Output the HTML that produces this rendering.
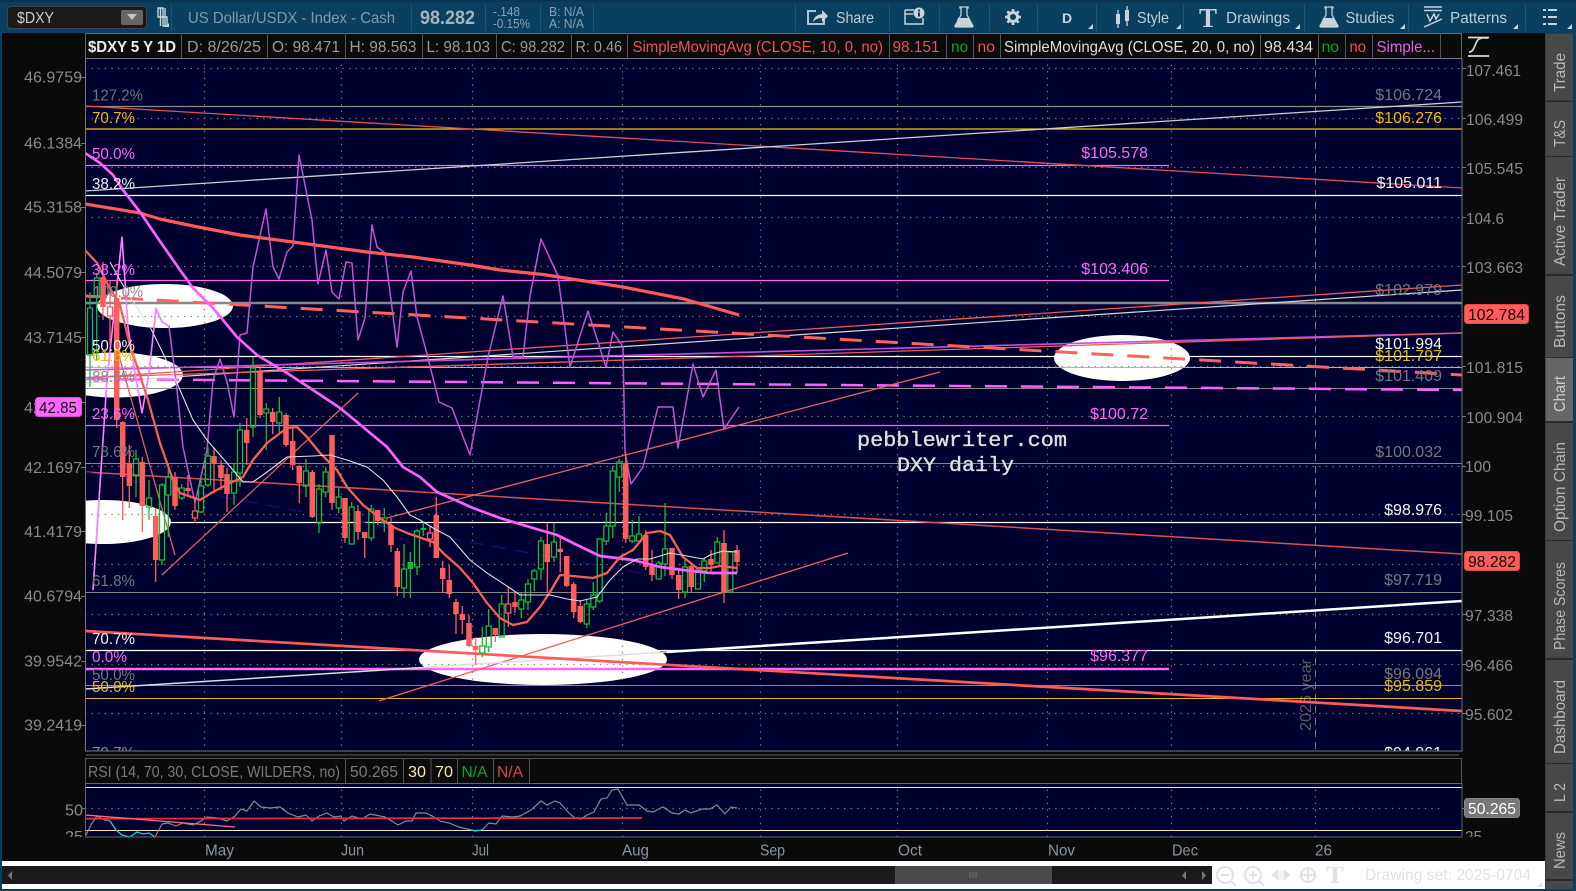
<!DOCTYPE html>
<html><head><meta charset="utf-8"><title>DXY</title>
<style>html,body{margin:0;padding:0;background:#0a3f5f;width:1576px;height:891px;overflow:hidden}svg{display:block;font-family:"Liberation Sans",sans-serif;font-size:16px}</style></head>
<body>
<svg width="1576" height="891" viewBox="0 0 1576 891" xmlns="http://www.w3.org/2000/svg">
<defs>
<clipPath id="c"><rect x="85" y="58" width="1377" height="693"/></clipPath>
<clipPath id="r"><rect x="85" y="783" width="1377" height="54"/></clipPath>
<clipPath id="a"><rect x="2" y="783" width="1544" height="54"/></clipPath>
</defs>
<rect width="1576" height="891" fill="#0a3f5f"/>
<rect width="1576" height="2" fill="#0c3550"/>
<rect x="2" y="33" width="1543" height="828" fill="#0a0a0a"/>
<rect x="1545" y="33" width="28" height="856" fill="#2a2a2a"/>
<rect x="2" y="861" width="1543" height="28" fill="#fff"/>

<!-- top bar -->
<g stroke="#1f5674" stroke-width="1"><path d="M171.500 4V31M411.500 4V31M485.500 4V31M540.500 4V31M593.500 4V31M795.500 4V31M889.500 4V31M939.500 4V31M989.500 4V31M1037.500 4V31M1096.500 4V31M1183.500 4V31M1304.500 4V31M1408.500 4V31M1525.500 4V31"/></g>
<rect x="7.500" y="6.500" width="139" height="22" rx="3" fill="#1a1a1a" stroke="#444"/>
<text x="17" y="23" fill="#ccc" textLength="37" lengthAdjust="spacingAndGlyphs">$DXY</text>
<rect x="121" y="10" width="22" height="15" rx="2" fill="#666"/><path d="M127 14h10l-5 6z" fill="#c4c4c4"/>
<path d="M158 8h5v9h-5zM163 17h4v9h-4zM160.500 8v18M165 8v18" fill="none" stroke="#c8d4dc" stroke-width="1.400"/><path d="M169 27h-4l4-4z" fill="#c8d4dc"/>
<text x="188" y="23" fill="#7f99a9" textLength="207" lengthAdjust="spacingAndGlyphs">US Dollar/USDX - Index - Cash</text>
<text x="420" y="24" fill="#a4b4bd" font-weight="bold" font-size="19" textLength="55" lengthAdjust="spacingAndGlyphs">98.282</text>
<text x="493" y="16" fill="#8ba2b0" font-size="13" textLength="27" lengthAdjust="spacingAndGlyphs">-.148</text>
<text x="493" y="28" fill="#8ba2b0" font-size="13" textLength="37" lengthAdjust="spacingAndGlyphs">-0.15%</text>
<text x="549" y="16" fill="#8ba2b0" font-size="13" textLength="35" lengthAdjust="spacingAndGlyphs">B: N/A</text>
<text x="549" y="28" fill="#8ba2b0" font-size="13" textLength="35" lengthAdjust="spacingAndGlyphs">A: N/A</text>
<path d="M816 11h-8v13h16v-5" fill="none" stroke="#c8d4dc" stroke-width="1.800"/>
<path d="M813 22q1-7 9-8v-4l6 6-6 6v-4q-6 0-9 4z" fill="#c8d4dc"/>
<text x="836" y="23" fill="#c0ccd4" textLength="38" lengthAdjust="spacingAndGlyphs">Share</text>
<path d="M905 10v14h18v-6M905 10h9M905 14h8" fill="none" stroke="#c8d4dc" stroke-width="1.500"/>
<circle cx="919" cy="13" r="5.500" fill="#c8d4dc"/><path d="M918 9.500h2v2h-2zM918 12.500h2v4h-2z" fill="#0a3f5f"/>
<path d="M960 7h8v1h-1v7l6 11q0 1-1 1h-16q-1 0-1-1l6-11V8h-1z" fill="none" stroke="#c8d4dc" stroke-width="1.300"/><path d="M958 18h11l4 9h-18z" fill="#c8d4dc"/>
<circle cx="1013" cy="17" r="4.500" fill="none" stroke="#c8d4dc" stroke-width="3"/>
<path d="M1013 9v16M1005 17h16M1007.300 11.300l11.400 11.400M1018.700 11.300l-11.400 11.400" stroke="#c8d4dc" stroke-width="2.600" stroke-dasharray="2.600 10.800"/>
<text x="1062" y="23" fill="#c8d4dc" font-weight="bold" font-size="14">D</text>
<path d="M1116 14h4v10h-4zM1125 10h4v11h-4z" fill="#c8d4dc"/><path d="M1118 10v18M1127 6v20" stroke="#c8d4dc" stroke-width="1.300"/>
<text x="1137" y="23" fill="#c0ccd4" textLength="32" lengthAdjust="spacingAndGlyphs">Style</text>
<text x="1199" y="27" fill="#c8d4dc" font-size="27" font-weight="bold" style="font-family:'Liberation Serif',serif" textLength="18" lengthAdjust="spacingAndGlyphs">T</text>
<text x="1226" y="23" fill="#c0ccd4" textLength="64" lengthAdjust="spacingAndGlyphs">Drawings</text>
<path d="M1325 7h8v1h-1v7l6 11q0 1-1 1h-16q-1 0-1-1l6-11V8h-1z" fill="none" stroke="#c8d4dc" stroke-width="1.300"/><path d="M1323 18h11l4 9h-18z" fill="#c8d4dc"/>
<text x="1345.500" y="23" fill="#c0ccd4" textLength="49" lengthAdjust="spacingAndGlyphs">Studies</text>
<path d="M1424 7h18M1424 10.500h18M1427 14l3 7 4-7 2 5 3-5M1424 27l18-8" fill="none" stroke="#c8d4dc" stroke-width="1.500"/>
<text x="1450" y="23" fill="#c0ccd4" textLength="57" lengthAdjust="spacingAndGlyphs">Patterns</text>
<path d="M1543 10h3M1543 17h3M1543 24h3M1548 10h9M1548 17h9M1548 24h9" stroke="#c8d4dc" stroke-width="2"/>
<path d="M1093 24v5h-5zM1181 24v5h-5zM1300 24v5h-5zM1405 24v5h-5zM1518 24v5h-5zM1572 24v5h-5z" fill="#c8d4dc"/>

<!-- header row -->
<rect x="85.500" y="33.500" width="1376" height="25" fill="#0b0b0b" stroke="#666"/>
<path d="M181.500 33V58M267.500 33V58M345.500 33V58M422.500 33V58M496.500 33V58M571.500 33V58M627.500 33V58M889.500 33V58M946.500 33V58M973.500 33V58M1000.500 33V58M1260.500 33V58M1318.500 33V58M1345.500 33V58M1372.500 33V58M1440.500 33V58" stroke="#555"/>
<text x="88" y="52" fill="#eee" font-weight="bold" textLength="88" lengthAdjust="spacingAndGlyphs">$DXY 5 Y 1D</text>
<g fill="#9a9a9a">
<text x="187" y="52" textLength="74" lengthAdjust="spacingAndGlyphs">D: 8/26/25</text>
<text x="272" y="52" textLength="68" lengthAdjust="spacingAndGlyphs">O: 98.471</text>
<text x="349.500" y="52" textLength="67" lengthAdjust="spacingAndGlyphs">H: 98.563</text>
<text x="426.500" y="52" textLength="63.500" lengthAdjust="spacingAndGlyphs">L: 98.103</text>
<text x="501" y="52" textLength="64" lengthAdjust="spacingAndGlyphs">C: 98.282</text>
<text x="575.500" y="52" textLength="46.500" lengthAdjust="spacingAndGlyphs">R: 0.46</text>
</g>
<text x="632.500" y="52" fill="#f05050" textLength="250.500" lengthAdjust="spacingAndGlyphs">SimpleMovingAvg (CLOSE, 10, 0, no)</text>
<text x="892.500" y="52" fill="#f05050" textLength="47" lengthAdjust="spacingAndGlyphs">98.151</text>
<text x="951" y="52" fill="#00a828" textLength="17" lengthAdjust="spacingAndGlyphs">no</text>
<text x="977.500" y="52" fill="#f05050" textLength="17.500" lengthAdjust="spacingAndGlyphs">no</text>
<text x="1004" y="52" fill="#ddd" textLength="251" lengthAdjust="spacingAndGlyphs">SimpleMovingAvg (CLOSE, 20, 0, no)</text>
<text x="1264" y="52" fill="#ddd" textLength="49" lengthAdjust="spacingAndGlyphs">98.434</text>
<text x="1321.500" y="52" fill="#00a828" textLength="17.500" lengthAdjust="spacingAndGlyphs">no</text>
<text x="1349.500" y="52" fill="#f05050" textLength="16.500" lengthAdjust="spacingAndGlyphs">no</text>
<text x="1376.500" y="52" fill="#e060f0" textLength="58.500" lengthAdjust="spacingAndGlyphs">Simple...</text>

<!-- chart -->
<rect x="85" y="58" width="1377" height="693" fill="#000030"/>
<g clip-path="url(#c)">
<g fill="#fff">
<ellipse cx="165" cy="306" rx="68" ry="22"/>
<ellipse cx="115" cy="375" rx="68" ry="22.500"/>
<ellipse cx="103" cy="522" rx="68" ry="22"/>
<ellipse cx="1122" cy="358" rx="68" ry="23"/>
<ellipse cx="543" cy="659.500" rx="124" ry="25.500"/>
</g>
<g stroke="#85856a" stroke-width="1.200" stroke-dasharray="1.300 5.300" fill="none">
<path d="M85 68.500H1462M85 118.500H1462M85 167.500H1462M85 217.500H1462M85 266.500H1462M85 316.500H1462M85 366.500H1462M85 416.500H1462M85 466.500H1462M85 514.500H1462M85 564.500H1462M85 614.500H1462M85 664.500H1462M85 713.500H1462"/>
<path d="M204.500 58V751M341.500 58V751M472.500 58V751M622.500 58V751M760.500 58V751M897.500 58V751M1047.500 58V751M1171.500 58V751"/>
</g>
<path d="M1315.500 58V751" stroke="#777" stroke-dasharray="7 5"/>
<text transform="translate(1311,731) rotate(-90)" fill="#5d5d5d" textLength="72" lengthAdjust="spacingAndGlyphs">2026 year</text>

<!-- horizontal levels -->
<path d="M85 106.500H1462" stroke="#8a8a8a" stroke-width="1.200"/>
<path d="M85 303H1462" stroke="#888" stroke-width="2.400"/>
<path d="M85 388.500H1462M85 463.500H1462M85 592.500H1462M85 685.500H1462" stroke="#888"/>
<path d="M85 129H1462" stroke="#f5c400" stroke-width="1.200"/>
<path d="M85 367.500H1462M85 698.500H1462" stroke="#e8bc00"/>
<path d="M85 195.500H1462M85 356.500H1462M85 522.500H1462M85 650.500H1462" stroke="#fff" stroke-width="1.200"/>
<path d="M85 165.500H1169M85 280.500H1169M85 425.500H1169" stroke="#ff66ff" stroke-width="1.200"/>
<path d="M85 669H1169" stroke="#ff66ff" stroke-width="2.400"/>

<!-- trend lines -->
<path d="M85 106L1462 188" stroke="#e25252" stroke-width="1.300"/>
<path d="M85 191L1462 102" stroke="#cfcfcf" stroke-width="1.300"/>
<path d="M85 383L1462 290" stroke="#d8d8d8" stroke-width="1.200"/>
<path d="M85 378L1462 285" stroke="#ee5a5a" stroke-width="1.300"/>
<path d="M85 370L1462 333" stroke="#c050d8" stroke-width="1.600"/>
<path d="M85 377.500L1462 333" stroke="#ee5a5a" stroke-width="1.300"/>
<path d="M85 296L1462 375" stroke="#ff6060" stroke-width="3" stroke-dasharray="22 14"/>
<path d="M85 379L1462 390" stroke="#ff60ff" stroke-width="2.500" stroke-dasharray="22 14"/>
<path d="M85 472L1462 554" stroke="#d85050" stroke-width="1.500"/>
<path d="M85 472L733 590" stroke="#10107a" stroke-width="1.300" stroke-dasharray="14 9"/>
<path d="M162 575L358 393" stroke="#e86060" stroke-width="1.200"/>
<path d="M116 345L175 555" stroke="#e85c5c" stroke-width="1.300"/>
<path d="M379 701L848 553" stroke="#f06060" stroke-width="1.300"/>
<path d="M387 518L940 372" stroke="#f06060" stroke-width="1.300"/>
<path d="M85 689L667 652" stroke="#ddd" stroke-width="1.500"/>
<path d="M667 652L1462 601" stroke="#fff" stroke-width="2.500"/>
<path d="M85 631L1462 711" stroke="#ff5a5a" stroke-width="2.700"/>

<!-- purple jagged -->
<path d="M93 590L107 380L122 237L128 327L135 373L142 413L149 373L156 309L162 322L169 326L177 390L183 447L195 503L207 450L213 380L220 359L227 382L234 417L240 335L247 333L253 267L266 209L273 267L279 279L287 252L293 246L299 155L312 220L318 284L326 250L332 292L339 299L346 262L352 263L358 340L365 318L372 225L377 247L385 253L397 347L403 292L411 271L417 317L427 354L439 402L452 408L470 455L488 357L503 296L513 357L523 357L530 296L541 239L558 276L570 367L588 311L606 367L613 332L623 347L625 452L631 484L643 467L658 407L673 407L678 448L693 364L703 397L716 370L724 429L739 407" fill="none" stroke="#c452d4" stroke-width="1.500" stroke-linejoin="round"/>
<path d="M93 590L107 380L122 237L128 327L135 373L142 413L149 373L156 309L162 322L169 326" fill="none" stroke="#ff80ff" stroke-width="1.500"/>

<!-- candles -->
<path d="M103 262V320M116.700 280V428M122.700 421V520M129.300 445V508M142.300 457V532M155.700 508V582M175 472V510M188 475V495M214 448V493M221 460V490M227 468V512M246.700 418V465M260 368V418M272.700 408V434M286 413V447M292.700 427V470M299.300 465V503M312.300 470V518M332 435V510M345 498V543M358 505V540M364.700 532V558M377.700 510V525M391 518V552M397.300 548V596M436.300 497V558M442.700 561V593M449.300 565V598M456 599V634M462.300 606V634M469 615V647M475.700 637V665M495.300 628V642M515 593V613M547.300 523V592M560.300 537V572M566.700 556V587M573.700 582V618M580.300 600V623M625.700 452V543M645.700 530V570M652 550V581M672 548V579M678.700 570V599M691.300 563V592M711 550V572M724 530V603M737 545V573" stroke="#ff5c5c" stroke-width="1.300" fill="none"/>
<path d="M103 277V307M116.700 298V420M122.700 422V477M129.300 463V486M142.300 462V506M155.700 516V560M175 478V506M188 488V491M214 456V463M221 465V478M227 474V494M246.700 430V443M260 372V415M272.700 412V422M286 415V445M292.700 441V465M299.300 466V483M312.300 472V517M332 435V503M345 498V538M358 511V532M364.700 532V538M377.700 510V521M391 525V545M397.300 551V587M436.300 515V558M442.700 568V579M449.300 580V594M456 602V614M462.300 614V620M469 623V646M475.700 646V650M495.300 628V635M515 602V607M547.300 544V562M560.300 549V552M566.700 556V586M573.700 584V612M580.300 606V622M625.700 463V539M645.700 535V567M652 566V575M672 548V575M678.700 575V590M691.300 566V587M711 559V565M724 543V592M737 550V562" stroke="#ff5c5c" stroke-width="5.500" fill="none"/>
<path d="M110 280V307M110 316V345M107.500 307h5V316h-5zM195 502V511M195 518V523M192.500 511h5V518h-5zM430 526V533M430 539V547M427.500 533h5V539h-5zM508.300 587V604M508.300 613V627M505.800 604h5V613h-5z" stroke="#ff5c5c" stroke-width="1.300" fill="none"/>
<path d="M90 292V308M90 355V387M87.500 308h5V355h-5zM96.700 273V278M96.700 297V360M94.200 278h5V297h-5zM136 450V459M136 476V497M133.500 459h5V476h-5zM149 480V498M149 507V520M146.500 498h5V507h-5zM162 483V485M162 560V565M159.500 485h5V560h-5zM168.300 463V477M168.300 495V537M165.800 477h5V495h-5zM181.700 484V488M181.700 498V500M179.200 488h5V498h-5zM201 477V486M201 512V513M198.500 486h5V512h-5zM208 447V456M208 485V487M205.500 456h5V485h-5zM234 463V472M234 493V505M231.500 472h5V493h-5zM240 423V430M240 473V487M237.500 430h5V473h-5zM253 357V368M253 427V437M250.500 368h5V427h-5zM266.300 403V409M266.300 413V450M263.800 409h5V413h-5zM279.300 397V412M279.300 423V433M276.800 412h5V423h-5zM306 459V471M306 486V497M303.500 471h5V486h-5zM319 484V489M319 523V533M316.500 489h5V523h-5zM325.700 467V472M325.700 492V497M323.200 472h5V492h-5zM338.700 487V497M338.700 508V513M336.200 497h5V508h-5zM351.700 502V507M349.200 507h5V544h-5zM371.300 505V509M371.300 538V541M368.800 509h5V538h-5zM384.300 508V518M384.300 523V532M381.800 518h5V523h-5zM404 544V569M404 588V598M401.500 569h5V588h-5zM417 529V531M417 567V575M414.500 531h5V567h-5zM482.300 627V646M482.300 653V657M479.800 646h5V653h-5zM488.700 609V626M488.700 647V652M486.200 626h5V647h-5zM501.700 595V604M499.200 604h5V637h-5zM521.300 593V600M521.300 609V618M518.800 600h5V609h-5zM528 579V584M528 602V610M525.500 584h5V602h-5zM534.300 569V571M534.300 579V591M531.800 571h5V579h-5zM541 537V541M541 569V580M538.500 541h5V569h-5zM554 523V542M554 557V562M551.500 542h5V557h-5zM586.700 600V604M586.700 624V628M584.200 604h5V624h-5zM593.300 582V595M593.300 607V610M590.800 595h5V607h-5zM599.700 538V539M599.700 601V603M597.200 539h5V601h-5zM606.300 513V526M606.300 541V545M603.800 526h5V541h-5zM612.700 466V471M612.700 526V538M610.200 471h5V526h-5zM619.300 459V462M619.300 477V492M616.800 462h5V477h-5zM632.300 520V536M632.300 541V543M629.800 536h5V541h-5zM639 516V534M639 541V542M636.500 534h5V541h-5zM658.700 561V563M656.200 563h5V579h-5zM665 503V549M665 564V576M662.500 549h5V564h-5zM685 560V567M685 592V598M682.500 567h5V592h-5zM698 568V570M695.500 570h5V589h-5zM704.300 558V561M704.300 571V582M701.800 561h5V571h-5zM717.300 537V542M714.800 542h5V563h-5zM730.300 551V552M727.800 552h5V592h-5z" stroke="#0fc02f" stroke-width="1.300" fill="none"/>
<path d="M410.300 552V598M423.300 522V536" stroke="#0fc02f" stroke-width="1.300"/>
<rect x="407.500" y="562" width="5.500" height="7" fill="#0fc02f"/><rect x="420.500" y="528" width="5.500" height="2" fill="#0fc02f"/>

<!-- moving averages -->
<path d="M85 204L140 213L160 219L193 226L240 235L293 242L367 252L413 257L470 265L500 270L543 274.500L623 287L684 299L739 315" fill="none" stroke="#ff5a5a" stroke-width="3.200" stroke-linejoin="round"/>
<path d="M85 153L100 163L113 175L123 190L140 212L157 237L180 270L193 288L213 308L237 337L257 355L287 373L313 390L340 408L363 427L387 447L403 467L420 477L437 492L473 508L500 518L533 528L557 535L577 545L600 556L633 560L660 567L683 570L710 573L737 573" fill="none" stroke="#ff60ff" stroke-width="2.700" stroke-linejoin="round"/>
<path d="M85 250L97 263L108 285L120 305L130 345L148 400L160 443L173 480L180 493L200 500L213 492L230 483L243 477L253 460L267 443L287 428L297 427L307 437L320 453L337 470L347 487L363 505L380 518L393 527L407 533L433 542L443 553L460 568L473 583L487 603L500 618L513 625L527 622L540 607L550 592L560 575L573 576L593 578L607 573L620 557L633 550L647 533L660 531L670 535L683 557L697 568L710 568L720 566L737 568" fill="none" stroke="#f46058" stroke-width="2.300" stroke-linejoin="round"/>
<path d="M110 262L120 280L130 297L150 327L160 347L177 383L193 420L207 440L227 463L243 482L253 482L267 472L287 457L313 456L330 455L347 460L367 467L383 480L397 497L410 515L420 520L433 528L450 537L470 560L487 573L510 588L520 595L533 595L550 595L567 599L580 601L597 597L610 580L623 567L637 559L650 559L670 553L687 556L703 559L710 555L723 551L737 552" fill="none" stroke="#e0e0e0" stroke-width="1.100" stroke-linejoin="round"/>

<!-- labels -->
<g font-size="16">
<text x="92" y="100.500" fill="#747474" textLength="51" lengthAdjust="spacingAndGlyphs">127.2%</text>
<text x="92" y="123" fill="#f0c000" textLength="43" lengthAdjust="spacingAndGlyphs">70.7%</text>
<text x="92" y="159" fill="#ff66ff" textLength="43" lengthAdjust="spacingAndGlyphs">50.0%</text>
<text x="92" y="189" fill="#f0f0f0" textLength="43" lengthAdjust="spacingAndGlyphs">38.2%</text>
<text x="92" y="275" fill="#ff66ff" textLength="43" lengthAdjust="spacingAndGlyphs">38.2%</text>
<text x="93" y="297" fill="#888" textLength="50" lengthAdjust="spacingAndGlyphs">100.0%</text>
<text x="92" y="351" fill="#f4f4f4" textLength="43" lengthAdjust="spacingAndGlyphs">50.0%</text>
<text x="92" y="361" fill="#e8bc00" textLength="43" lengthAdjust="spacingAndGlyphs">61.8%</text>
<text x="92" y="382" fill="#888" textLength="43" lengthAdjust="spacingAndGlyphs">88.6%</text>
<text x="92" y="419" fill="#ff66ff" textLength="43" lengthAdjust="spacingAndGlyphs">23.6%</text>
<text x="92" y="457" fill="#777" textLength="43" lengthAdjust="spacingAndGlyphs">78.6%</text>
<text x="92" y="586" fill="#777" textLength="43" lengthAdjust="spacingAndGlyphs">61.8%</text>
<text x="92" y="644" fill="#f4f4f4" textLength="43" lengthAdjust="spacingAndGlyphs">70.7%</text>
<text x="92" y="662" fill="#ff66ff" textLength="35" lengthAdjust="spacingAndGlyphs">0.0%</text>
<text x="92" y="680" fill="#777" textLength="43" lengthAdjust="spacingAndGlyphs">50.0%</text>
<text x="92" y="692" fill="#e8bc00" textLength="43" lengthAdjust="spacingAndGlyphs">50.0%</text>
<text x="92" y="758" fill="#888" textLength="43" lengthAdjust="spacingAndGlyphs">70.7%</text>
</g>
<g text-anchor="end">
<text x="1442" y="100" fill="#777">$106.724</text>
<text x="1442" y="123" fill="#f0c000">$106.276</text>
<text x="1148" y="158" fill="#ff66ff">$105.578</text>
<text x="1442" y="188" fill="#f4f4f4">$105.011</text>
<text x="1148" y="274" fill="#ff66ff">$103.406</text>
<text x="1442" y="295" fill="#777">$102.979</text>
<text x="1442" y="349" fill="#f4f4f4">$101.994</text>
<text x="1442" y="361" fill="#e8bc00">$101.797</text>
<text x="1442" y="381" fill="#777">$101.409</text>
<text x="1148" y="419" fill="#ff66ff">$100.72</text>
<text x="1442" y="457" fill="#777">$100.032</text>
<text x="1442" y="515" fill="#f4f4f4">$98.976</text>
<text x="1442" y="585" fill="#777">$97.719</text>
<text x="1442" y="643" fill="#f4f4f4">$96.701</text>
<text x="1148" y="661" fill="#ff66ff">$96.377</text>
<text x="1442" y="679" fill="#777">$96.094</text>
<text x="1442" y="691" fill="#e8bc00">$95.859</text>
<text x="1442" y="758" fill="#f4f4f4">$94.861</text>
</g>
<text x="857" y="446" fill="#e0e0e0" stroke="#e0e0e0" stroke-width=".35" style="font-family:'Liberation Mono',monospace;font-size:20.500px" textLength="210" lengthAdjust="spacingAndGlyphs">pebblewriter.com</text>
<text x="897" y="471" fill="#e0e0e0" stroke="#e0e0e0" stroke-width=".35" style="font-family:'Liberation Mono',monospace;font-size:20.500px" textLength="117" lengthAdjust="spacingAndGlyphs">DXY daily</text>
</g>
<rect x="85.500" y="58.500" width="1376.500" height="692.500" fill="none" stroke="#777"/>

<!-- left axis -->
<g fill="#8a8a8a" text-anchor="end">
<text x="82" y="82.500">46.9759</text><text x="82" y="148.500">46.1384</text><text x="82" y="212.500">45.3158</text><text x="82" y="278">44.5079</text><text x="82" y="343">43.7145</text><text x="82" y="413">42.9381</text><text x="82" y="473">42.1697</text><text x="82" y="537">41.4179</text><text x="82" y="601.500">40.6794</text><text x="82" y="666.500">39.9542</text><text x="82" y="730.500">39.2419</text>
</g>
<path d="M81 77.500h4M81 143.500h4M81 207.500h4M81 272.500h4M81 337.500h4M81 402.500h4M81 467.500h4M81 531.500h4M81 596.500h4M81 661.500h4M81 725.500h4" stroke="#777"/>
<rect x="35.500" y="397.500" width="46" height="19" rx="3" fill="#ff66ff" stroke="#e24ae2"/>
<text x="39" y="413" fill="#111" textLength="38" lengthAdjust="spacingAndGlyphs">42.85</text>

<!-- right axis -->
<g fill="#8a8a8a">
<text x="1466" y="76" textLength="55" lengthAdjust="spacingAndGlyphs">107.461</text><text x="1466" y="125" textLength="57" lengthAdjust="spacingAndGlyphs">106.499</text><text x="1466" y="174" textLength="57" lengthAdjust="spacingAndGlyphs">105.545</text><text x="1466" y="224" textLength="38" lengthAdjust="spacingAndGlyphs">104.6</text><text x="1466" y="273" textLength="57" lengthAdjust="spacingAndGlyphs">103.663</text><text x="1466" y="373" textLength="57" lengthAdjust="spacingAndGlyphs">101.815</text><text x="1466" y="423" textLength="57" lengthAdjust="spacingAndGlyphs">100.904</text><text x="1465" y="472" textLength="26" lengthAdjust="spacingAndGlyphs">100</text><text x="1465" y="521" textLength="48" lengthAdjust="spacingAndGlyphs">99.105</text><text x="1465" y="621" textLength="48" lengthAdjust="spacingAndGlyphs">97.338</text><text x="1465" y="671" textLength="48" lengthAdjust="spacingAndGlyphs">96.466</text><text x="1465" y="720" textLength="48" lengthAdjust="spacingAndGlyphs">95.602</text>
</g>
<path d="M1462 68.500h4M1462 118.500h4M1462 167.500h4M1462 217.500h4M1462 266.500h4M1462 366.500h4M1462 416.500h4M1462 466.500h4M1462 514.500h4M1462 614.500h4M1462 664.500h4M1462 713.500h4" stroke="#777"/>
<path d="M1468 37.500h21M1468 56h21M1469 52c6 0 6-11 10-13 4-2 6-1 9-1" fill="none" stroke="#d8d8d8" stroke-width="1.700"/>
<rect x="1464.500" y="304.500" width="64" height="19" rx="3" fill="#ff5c5c" stroke="#e24a4a"/>
<text x="1468" y="320" fill="#1a0505" textLength="57" lengthAdjust="spacingAndGlyphs">102.784</text>
<rect x="1464.500" y="551.500" width="55" height="19" rx="3" fill="#ff5c5c" stroke="#e24a4a"/>
<text x="1468" y="567" fill="#1a0505" textLength="48" lengthAdjust="spacingAndGlyphs">98.282</text>
<rect x="1464.500" y="798.500" width="55" height="19" rx="3" fill="#777" stroke="#888"/>
<text x="1468" y="814" fill="#fff" textLength="48" lengthAdjust="spacingAndGlyphs">50.265</text>

<!-- separator and RSI -->
<rect x="86" y="754" width="1373" height="2" fill="#333"/>
<rect x="85.500" y="758.500" width="1376" height="25" fill="#0b0b0b" stroke="#555"/>
<path d="M345.500 758V783M403.500 758V783M431 758V783M457.500 758V783M493.500 758V783M529.500 758V783" stroke="#555"/>
<text x="88" y="777" fill="#7a7a7a" textLength="252" lengthAdjust="spacingAndGlyphs">RSI (14, 70, 30, CLOSE, WILDERS, no)</text>
<text x="350" y="777" fill="#7a7a7a" textLength="48" lengthAdjust="spacingAndGlyphs">50.265</text>
<text x="408" y="777" fill="#f5e6b0" textLength="18" lengthAdjust="spacingAndGlyphs">30</text>
<text x="435" y="777" fill="#f5e6b0" textLength="18" lengthAdjust="spacingAndGlyphs">70</text>
<text x="461.500" y="777" fill="#00a828" textLength="26" lengthAdjust="spacingAndGlyphs">N/A</text>
<text x="497" y="777" fill="#d84a4a" textLength="26" lengthAdjust="spacingAndGlyphs">N/A</text>
<rect x="85" y="783" width="1377" height="54" fill="#000030"/>
<g clip-path="url(#r)">
<path d="M85 787.500H1462M85 830.500H1462" stroke="#f5e6b0" stroke-width="1.100"/>
<path d="M85 808.500H1440" stroke="#85856a" stroke-width="1.200" stroke-dasharray="1.300 5.300"/>
<path d="M204.500 783V837M341.500 783V837M472.500 783V837M622.500 783V837M760.500 783V837M897.500 783V837M1047.500 783V837M1171.500 783V837M1315.500 783V837" stroke="#85856a" stroke-width="1.200" stroke-dasharray="1.300 5.300"/>
<path d="M85 837L92 823L97 816L105 820L110 821" fill="none" stroke="#8a8a8a" stroke-width="1.200"/>
<path d="M110 821L116 830L122 835L130 837L137 832L143 834L149 833L155 837" fill="none" stroke="#20d0e0" stroke-width="1.300"/>
<path d="M155 837L162 824L168 823L176 826L183 823L193 825L199 822L207 817L217 818L227 821L235 816L241 809L247 811L254 801L261 807L270 808L280 807L288 813L298 817L306 815L312 821L319 816L327 813L334 817L341 816L344 821L352 816L362 819L370 814L385 817L398 825L406 821L412 821L416 813L426 813L434 817L440 821L449 823L459 827L467 829" fill="none" stroke="#8a8a8a" stroke-width="1.200"/>
<path d="M467 829L475 831L482 830" fill="none" stroke="#20d0e0" stroke-width="1.300"/>
<path d="M482 830L489 823L496 824L502 816L513 817L520 816L531 810L541 801L547 805L555 801L560 803L569 813L575 818L581 819L587 815L594 812L601 799L607 798L612 790L618 789L627 805L639 805L647 811L653 812L663 807L672 813L679 814L685 810L691 813L702 809L710 809L717 805L725 814L731 807L737 808" fill="none" stroke="#8a8a8a" stroke-width="1.200"/>
<path d="M85 818.700L642 818" stroke="#e03040" stroke-width="1.800"/>
<path d="M85 815L235 827" stroke="#ff7070" stroke-width="1.300"/>
</g>
<rect x="85.500" y="783.500" width="1376.500" height="53.500" fill="none" stroke="#666"/>
<g fill="#8a8a8a"><text x="65" y="815.500" textLength="18" lengthAdjust="spacingAndGlyphs">50</text></g>
<g clip-path="url(#a)" fill="#8a8a8a"><text x="65" y="842" textLength="18" lengthAdjust="spacingAndGlyphs">25</text><text x="1465" y="842" textLength="17" lengthAdjust="spacingAndGlyphs">25</text></g>
<path d="M81 808.500h4M1462 808.500h4" stroke="#777"/>

<!-- date axis -->
<g fill="#8796a3">
<text x="205" y="855.500" textLength="29" lengthAdjust="spacingAndGlyphs">May</text><text x="341" y="855.500" textLength="23" lengthAdjust="spacingAndGlyphs">Jun</text><text x="472" y="855.500" textLength="17" lengthAdjust="spacingAndGlyphs">Jul</text><text x="622" y="855.500" textLength="27" lengthAdjust="spacingAndGlyphs">Aug</text><text x="760" y="855.500" textLength="25" lengthAdjust="spacingAndGlyphs">Sep</text><text x="898" y="855.500" textLength="24" lengthAdjust="spacingAndGlyphs">Oct</text><text x="1048" y="855.500" textLength="27" lengthAdjust="spacingAndGlyphs">Nov</text><text x="1172" y="855.500" textLength="26" lengthAdjust="spacingAndGlyphs">Dec</text><text x="1315" y="855.500" textLength="17" lengthAdjust="spacingAndGlyphs">26</text>
</g>

<!-- scrollbar -->
<rect x="2" y="866" width="1210" height="18" fill="#1b1b1b"/>
<rect x="895" y="866" width="157" height="18" fill="#4a4a4a"/>
<path d="M970 872v6M973 872v6M976 872v6" stroke="#777"/>
<path d="M12 871v9l-4-4.500zM1186 871v9l-4-4.500zM1202 871v9l4-4.500z" fill="#777"/>
<g fill="none" stroke="#e2e2e2" stroke-width="2">
<circle cx="1225" cy="875" r="8"/><path d="M1231 881l5 5M1221 875h8"/>
<circle cx="1253" cy="875" r="8"/><path d="M1259 881l5 5M1249 875h8M1253 871v8"/>
<circle cx="1308" cy="875" r="7"/><path d="M1300 875h16M1308 867v16"/>
</g>
<path d="M1278 870v10l-6-5zM1284 870v10l6-5zM1280 870v10M1282 870v10" fill="#e2e2e2" stroke="#e2e2e2" stroke-width=".8"/>
<text x="1326" y="883" fill="#e2e2e2" font-size="24" font-weight="bold" style="font-family:'Liberation Serif',serif" textLength="18" lengthAdjust="spacingAndGlyphs">T</text>
<text x="1365" y="880" fill="#e2e2e2" textLength="166" lengthAdjust="spacingAndGlyphs">Drawing set: 2025-0704</text>
<path d="M1542 882v5h-5z" fill="#e2e2e2"/>

<!-- right tabs -->
<g fill="#484848">
<rect x="1545.500" y="33.500" width="27.500" height="67"/><rect x="1545.500" y="102" width="27.500" height="54"/><rect x="1545.500" y="157" width="27.500" height="117"/><rect x="1545.500" y="276" width="27.500" height="81"/><rect x="1545.500" y="358" width="27.500" height="63" fill="#666"/><rect x="1545.500" y="423" width="27.500" height="117"/><rect x="1545.500" y="541" width="27.500" height="117"/><rect x="1545.500" y="660" width="27.500" height="103"/><rect x="1545.500" y="764" width="27.500" height="47"/><rect x="1545.500" y="813" width="27.500" height="66"/><rect x="1545.500" y="881" width="27.500" height="8"/>
</g>
<g fill="#b8b8b8">
<text transform="translate(1565,92) rotate(-90)" textLength="39" lengthAdjust="spacingAndGlyphs">Trade</text>
<text transform="translate(1565,147) rotate(-90)" textLength="27" lengthAdjust="spacingAndGlyphs">T&amp;S</text>
<text transform="translate(1565,266) rotate(-90)" textLength="89" lengthAdjust="spacingAndGlyphs">Active Trader</text>
<text transform="translate(1565,348) rotate(-90)" textLength="53" lengthAdjust="spacingAndGlyphs">Buttons</text>
<text transform="translate(1565,412) rotate(-90)" fill="#ccc" textLength="36" lengthAdjust="spacingAndGlyphs">Chart</text>
<text transform="translate(1565,532) rotate(-90)" textLength="90" lengthAdjust="spacingAndGlyphs">Option Chain</text>
<text transform="translate(1565,650) rotate(-90)" textLength="88" lengthAdjust="spacingAndGlyphs">Phase Scores</text>
<text transform="translate(1565,754) rotate(-90)" textLength="74" lengthAdjust="spacingAndGlyphs">Dashboard</text>
<text transform="translate(1565,802) rotate(-90)" textLength="19" lengthAdjust="spacingAndGlyphs">L 2</text>
<text transform="translate(1565,869) rotate(-90)" textLength="37" lengthAdjust="spacingAndGlyphs">News</text>
</g>
</svg>
</body></html>
